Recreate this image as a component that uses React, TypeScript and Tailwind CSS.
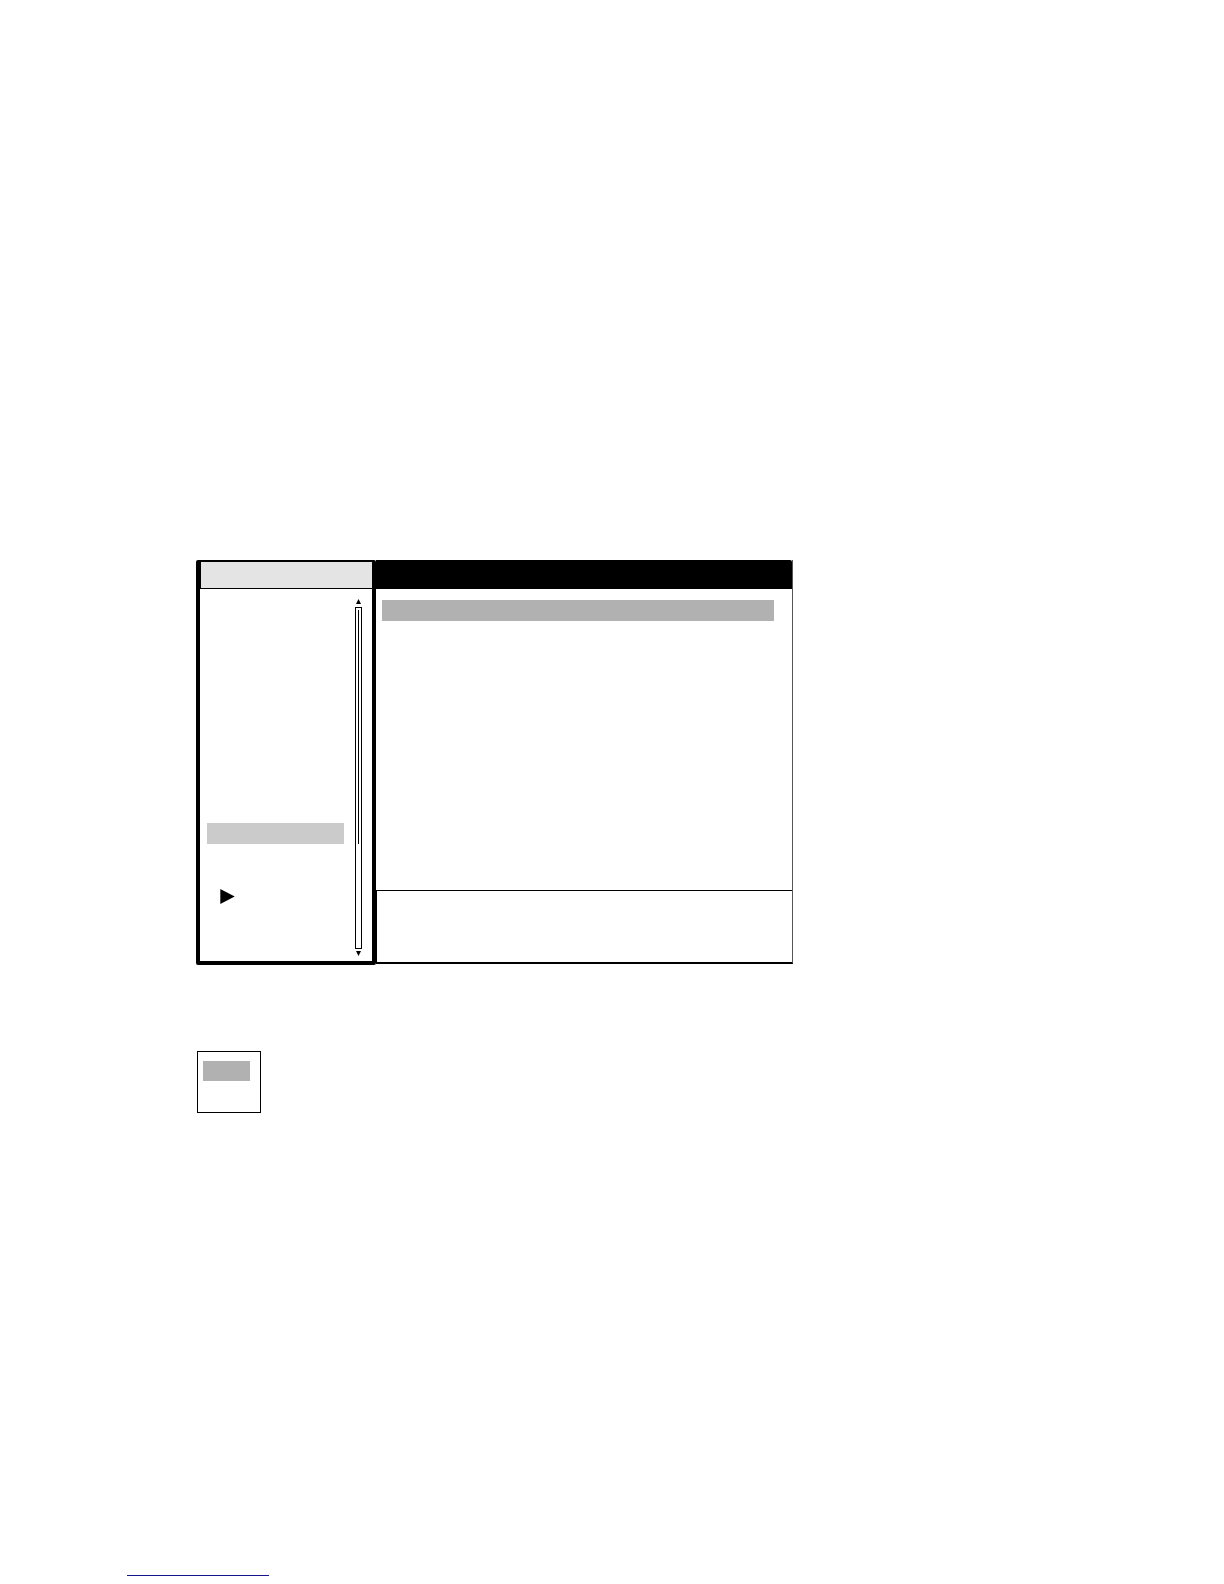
import { useState } from "react";

type ArrowProps = {
  label: string;
  points: string;
};

function ScrollArrow({ label, points }: ArrowProps) {
  return (
    <button type="button" aria-label={label} className="block h-[5px] w-[7px]">
      <svg viewBox="0 0 7 5" className="block h-[5px] w-[7px]">
        <polygon points={points} fill="black" />
      </svg>
    </button>
  );
}

function ScrollBar() {
  return (
    <div className="flex w-[7px] flex-col items-center justify-between gap-[2px] pt-[10px] pb-[5px]">
      <ScrollArrow label="Scroll up" points="3.5,0 6,5 1,5" />
      <div className="mt-px flex w-full flex-1 justify-center border border-black pt-[2px]">
        <div className="h-[234px] w-px bg-black" />
      </div>
      <ScrollArrow label="Scroll down" points="1,0 6,0 3.5,5" />
    </div>
  );
}

function Sidebar() {
  const [expanded, setExpanded] = useState(false);

  return (
    <aside className="flex w-[180px] shrink-0 flex-col rounded-xs border-4 border-t-2 border-black">
      <div className="h-[27px] border-b border-l border-black bg-[#e4e4e4]" />
      <div className="flex flex-1 justify-between pr-[10px] pl-[7px]">
        <div className="w-[137px] pt-[234px] pb-[57px]">
          <button
            type="button"
            aria-label="Selected item"
            className="block h-[21px] w-full bg-[#cbcbcb]"
          />
          <button
            type="button"
            aria-label="Expand"
            aria-expanded={expanded}
            onClick={() => setExpanded(!expanded)}
            className="mt-[45px] ml-[13px] block"
          >
            <svg viewBox="0 0 15 15" className="block h-[15px] w-[15px]">
              <polygon points="0.3,0 14.7,7.5 0.3,15" fill="black" />
            </svg>
          </button>
        </div>
        <ScrollBar />
      </div>
    </aside>
  );
}

function Content() {
  return (
    <section className="mb-px flex flex-1 flex-col border-r border-b-2 border-r-[#555] border-b-black">
      <div className="h-[29px] rounded-tr-xs bg-black" />
      <div className="flex-1 pt-[11px] pr-[18px] pl-[6px]">
        <button
          type="button"
          aria-label="Selected entry"
          className="block h-[21px] w-full bg-[#b1b1b1]"
        />
      </div>
      <div className="h-[72px] border-t border-l border-black" />
    </section>
  );
}

export default function App() {
  return (
    <div className="min-h-screen bg-white font-['Liberation_Sans',sans-serif]">
      <main className="px-[196px] pt-[560px]">
        <div className="flex w-full max-w-[597px]">
          <Sidebar />
          <Content />
        </div>

        <div className="mt-[86px] ml-px h-[62px] w-[64px] border border-black px-[5px] py-[9px]">
          <button
            type="button"
            aria-label="Selected option"
            className="block h-[20px] w-[47px] bg-[#b1b1b1]"
          />
        </div>
      </main>

      <footer className="px-[127px] pt-[447px] pb-2">
        <a
          href="#"
          aria-label="Footer link"
          className="block h-[16px] w-[142px] border-b border-b-[#15158c]"
        />
      </footer>
    </div>
  );
}
